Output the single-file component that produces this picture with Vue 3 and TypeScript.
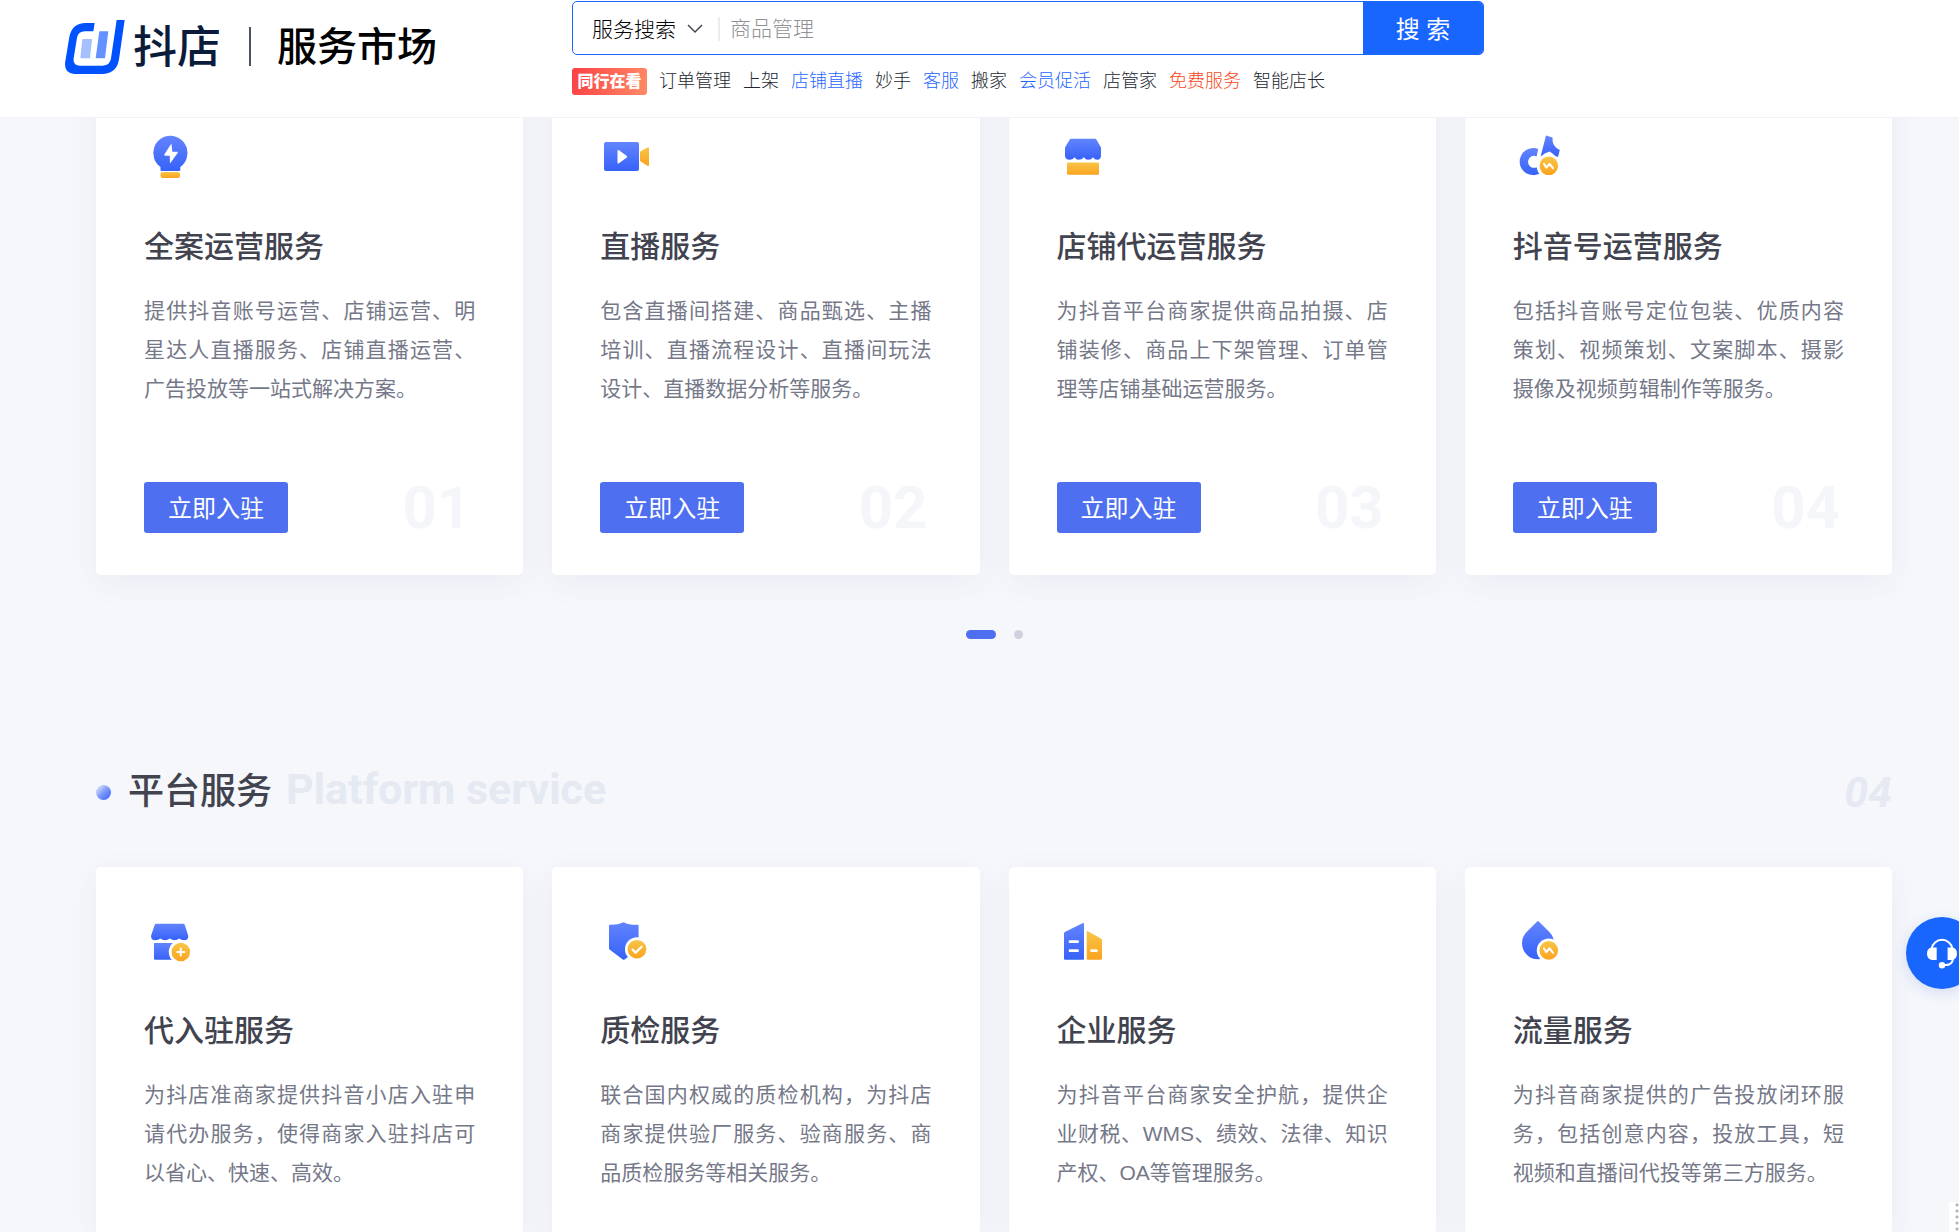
<script setup lang="ts">
import { ref } from 'vue'

type IconName = 'bulb' | 'video' | 'shop' | 'note' | 'shopPlus' | 'shield' | 'building' | 'drop'

interface Service {
  icon: IconName
  title: string
  text: string
}

interface HotWord {
  label: string
  tone?: 'blue' | 'red'
}

const keyword = ref('')
const scope = ref('service')

const hotWords: HotWord[] = [
  { label: '订单管理' },
  { label: '上架' },
  { label: '店铺直播', tone: 'blue' },
  { label: '妙手' },
  { label: '客服', tone: 'blue' },
  { label: '搬家' },
  { label: '会员促活', tone: 'blue' },
  { label: '店管家' },
  { label: '免费服务', tone: 'red' },
  { label: '智能店长' },
]

const operation: Service[] = [
  { icon: 'bulb', title: '全案运营服务', text: '提供抖音账号运营、店铺运营、明星达人直播服务、店铺直播运营、广告投放等一站式解决方案。' },
  { icon: 'video', title: '直播服务', text: '包含直播间搭建、商品甄选、主播培训、直播流程设计、直播间玩法设计、直播数据分析等服务。' },
  { icon: 'shop', title: '店铺代运营服务', text: '为抖音平台商家提供商品拍摄、店铺装修、商品上下架管理、订单管理等店铺基础运营服务。' },
  { icon: 'note', title: '抖音号运营服务', text: '包括抖音账号定位包装、优质内容策划、视频策划、文案脚本、摄影摄像及视频剪辑制作等服务。' },
]

const platform: Service[] = [
  { icon: 'shopPlus', title: '代入驻服务', text: '为抖店准商家提供抖音小店入驻申请代办服务，使得商家入驻抖店可以省心、快速、高效。' },
  { icon: 'shield', title: '质检服务', text: '联合国内权威的质检机构，为抖店商家提供验厂服务、验商服务、商品质检服务等相关服务。' },
  { icon: 'building', title: '企业服务', text: '为抖音平台商家安全护航，提供企业财税、WMS、绩效、法律、知识产权、OA等管理服务。' },
  { icon: 'drop', title: '流量服务', text: '为抖音商家提供的广告投放闭环服务，包括创意内容，投放工具，短视频和直播间代投等第三方服务。' },
]

const groups = [
  { key: 'operation', items: operation },
  { key: 'platform', items: platform },
]
</script>

<template>
  <div class="page">
    <svg class="defs" width="0" height="0" aria-hidden="true">
      <defs>
        <linearGradient id="blue" x1="0" y1="0" x2="0" y2="1">
          <stop offset="0" stop-color="#6284ff" />
          <stop offset="1" stop-color="#3762f8" />
        </linearGradient>
        <linearGradient id="gold" x1="0" y1="0" x2="0" y2="1">
          <stop offset="0" stop-color="#f8c548" />
          <stop offset="1" stop-color="#fba31f" />
        </linearGradient>
      </defs>
    </svg>

    <header class="header">
      <div class="brand">
        <svg class="logo" viewBox="75 57 180 162" aria-hidden="true">
          <path fill="#0052ff" d="M254 57L237 175Q230 219 186 219H102Q70 217 76 180L88 108Q96 66 137 66H164L160 91H135Q115 91 111 110L101 172Q98 194 120 194H188Q210 194 213 172L230 57Z" />
          <path fill="#a6c0ff" d="M127 114H156L150 172H121Z" />
          <path fill="#6391ff" d="M178 91H205L195 172H167Z" />
        </svg>
        <span class="brand-name">抖店</span>
        <span class="brand-line"></span>
        <span class="brand-sub">服务市场</span>
      </div>
      <div class="search-area">
        <form class="search" @submit.prevent>
          <div class="scope">
            <select v-model="scope" aria-label="搜索范围">
              <option value="service">服务搜索</option>
            </select>
            <svg class="chevron" viewBox="0 0 16 10" aria-hidden="true">
              <path d="M1 1L8 8L15 1" fill="none" stroke="#444950" stroke-width="1.5" />
            </svg>
          </div>
          <input v-model="keyword" type="text" placeholder="商品管理" aria-label="搜索关键词" />
          <button type="submit">搜 索</button>
        </form>
        <nav class="hot">
          <strong class="badge">同行在看</strong>
          <a v-for="word in hotWords" :key="word.label" href="#" :class="word.tone">{{ word.label }}</a>
        </nav>
      </div>
    </header>

    <main class="content">
      <template v-for="group in groups" :key="group.key">
        <div v-if="group.key === 'platform'" class="section-head">
          <span class="bullet"></span>
          <h2>平台服务</h2>
          <span class="section-en">Platform service</span>
          <span class="section-no">04</span>
        </div>

        <div class="cards">
          <article v-for="(item, index) in group.items" :key="item.title" class="card">
            <svg class="icon" viewBox="0 0 52 52" aria-hidden="true">
              <template v-if="item.icon === 'bulb'">
                <path fill="url(#blue)" d="M26.5 3.8A17.2 17.2 0 0 1 36.3 35V38Q36.3 39 35.3 39H17.5Q16.5 39 16.5 38V35A17.2 17.2 0 0 1 26.5 3.8Z" />
                <rect x="16.5" y="40" width="19.6" height="6" rx="2.5" fill="url(#gold)" />
                <path fill="#fff" d="M27.4 11.5L20.3 22.6Q20 23.6 21 23.7H25.7L26 31.5L33.8 20.8Q34 19.8 33.2 19.8H28.3Z" />
              </template>
              <template v-else-if="item.icon === 'video'">
                <rect x="4" y="10" width="35" height="29" rx="2" fill="url(#blue)" />
                <path fill="#fff" d="M17.5 19Q17.6 17.6 19 18.3L26.8 24Q27.4 24.8 26.8 25.4L19 31.2Q17.6 31.9 17.5 30.5Z" />
                <path fill="url(#gold)" d="M40 20.2Q40 19.7 40.6 19.3L47.5 15.4Q49 14.8 49 16.2V33Q49 34.5 47.5 33.8L40.6 29.5Q40 29.2 40 28.6Z" />
              </template>
              <template v-else-if="item.icon === 'shop'">
                <path fill="url(#blue)" d="M14.2 6.7H38Q39 6.7 39.5 7.7L44 15.5V24Q43.6 27.7 40.3 27.7Q37.5 27.7 36.1 25.2Q34.5 27.7 31 27.7Q28.5 27.7 26.9 25.2Q25 27.7 21.5 27.7Q19 27.7 17.7 25.2Q15.5 27.7 12.5 27.7Q8.4 27.7 8 24V15.5L12.6 7.7Q13.2 6.7 14.2 6.7Z" />
                <rect x="10" y="30.4" width="32" height="12.4" rx="1" fill="url(#gold)" />
              </template>
              <template v-else-if="item.icon === 'note'">
                <path fill="url(#blue)" d="M25.2 17.1A13.5 13.5 0 1 0 26.2 41.7Q24.2 39 23.6 35.3A6 6 0 1 1 23.6 24.4Z" />
                <path fill="url(#blue)" d="M33 3.6L39.5 5.5Q38.8 14.5 46.8 18L45 25Q41.6 24 39.5 21.5L36.7 19.5Q32 20.4 27.6 24.4Z" />
                <circle cx="35.8" cy="33.8" r="9.3" fill="url(#gold)" />
                <path d="M31 31.8L33.3 35.6L36.6 31.8L40 36.2" fill="none" stroke="#fff" stroke-width="2" stroke-linecap="round" stroke-linejoin="round" />
              </template>
              <template v-else-if="item.icon === 'shopPlus'">
                <path fill="url(#blue)" d="M12.5 7.7H39Q40.4 7.7 40.8 9L44.3 20Q44.3 24.2 40.2 24.2Q37 24.2 35.2 22.4Q33.2 24.2 30.5 24.2Q28 24.2 25.8 22.4Q23.6 24.2 21 24.2Q18.4 24.2 16.4 22.4Q14.4 24.2 11.3 24.2Q7 24.2 7 20L10.6 9Q11 7.7 12.5 7.7Z" />
                <path fill="url(#blue)" d="M10 27H41V43.7H11.5Q10 43.7 10 42.2Z" />
                <circle cx="36.8" cy="36" r="12" fill="#fff" />
                <circle cx="36.8" cy="36" r="9.3" fill="url(#gold)" />
                <path d="M36.8 32.4V39.6M33.2 36H40.4" stroke="#fff" stroke-width="2" stroke-linecap="round" />
              </template>
              <template v-else-if="item.icon === 'shield'">
                <path fill="url(#blue)" d="M23.7 6.2Q29 9 37.6 8.8Q38.6 8.8 38.6 9.8V32Q38.6 33 37.8 33.6L24.6 43.4Q23.7 44 22.8 43.4L9.8 33.8Q9 33.2 9 32.2V9.8Q9 8.8 10 8.8Q18 9 23.7 6.2Z" />
                <circle cx="37" cy="33.2" r="12" fill="#fff" />
                <circle cx="37" cy="33.2" r="9.3" fill="url(#gold)" />
                <path d="M32.6 33.6L35.6 36.6L41.6 30.8" fill="none" stroke="#fff" stroke-width="2.2" stroke-linecap="round" stroke-linejoin="round" />
              </template>
              <template v-else-if="item.icon === 'building'">
                <path fill="url(#blue)" d="M7 17.5Q7 16.5 7.8 16L25.5 7.2Q27 6.6 27 8V42.7Q27 43.7 26 43.7H8Q7 43.7 7 42.7Z" />
                <path fill="url(#gold)" d="M29.7 16Q29.8 14.6 31 15.3L44.2 22.7Q45 23.3 45 24.3V42.7Q45 43.7 44 43.7H30.7Q29.7 43.7 29.7 42.7Z" />
                <path d="M13 25.7H20.6M13 34.7H20.6M34.6 34.7H39.4" stroke="#fff" stroke-width="2.8" stroke-linecap="round" />
              </template>
              <template v-else>
                <path fill="url(#blue)" d="M24.2 5.5Q25 4.6 25.8 5.5L36.6 16.2A16 16 0 1 1 13.4 16.2Z" />
                <circle cx="35.8" cy="34.4" r="12" fill="#fff" />
                <circle cx="35.8" cy="34.4" r="9.3" fill="url(#gold)" />
                <path d="M31 32.4L33.3 36.2L36.6 32.4L40 36.8" fill="none" stroke="#fff" stroke-width="2" stroke-linecap="round" stroke-linejoin="round" />
              </template>
            </svg>
            <h3>{{ item.title }}</h3>
            <p>{{ item.text }}</p>
            <div v-if="group.key === 'operation'" class="card-foot">
              <button type="button">立即入驻</button>
              <span class="card-no">0{{ index + 1 }}</span>
            </div>
          </article>
        </div>

        <div v-if="group.key === 'operation'" class="dots">
          <button type="button" class="dot active" aria-label="第1页"></button>
          <button type="button" class="dot" aria-label="第2页"></button>
        </div>
      </template>
    </main>

    <button type="button" class="support" aria-label="在线客服">
      <svg viewBox="0 0 30 31" aria-hidden="true">
        <path d="M4.5 11A10.6 10.6 0 0 1 25.5 11M26 21Q25 27 19 27H15" fill="none" stroke="#fff" stroke-width="2" />
        <path fill="#fff" d="M9.7 9.5V22H5Q0 21 0 15.8Q0 10 5 9.5ZM20.6 9.5V22H25Q30 21 30 15.8Q30 10 25 9.5Z" />
        <circle cx="15" cy="27.2" r="3.2" fill="#fff" />
      </svg>
    </button>
    <div class="grip"></div>
  </div>
</template>

<style>
body {
  margin: 0;
}
</style>

<style scoped>
.page {
  height: 100vh;
  overflow-x: hidden;
  overflow-y: auto;
  scrollbar-width: none;
  background: #f5f7fb;
  font-family: "Liberation Sans", "Noto Sans CJK SC", sans-serif;
  color: #41434f;
}

.page * {
  box-sizing: border-box;
}

.defs {
  position: absolute;
}

button,
input,
select {
  margin: 0;
  border: 0;
  padding: 0;
  font-family: inherit;
}

button {
  cursor: pointer;
}

/* Header */
.header {
  position: sticky;
  top: 0;
  z-index: 2;
  display: flex;
  height: 118px;
  padding-left: 65px;
  background: #fff;
  border-bottom: 1px solid #f1f2f5;
}

.brand {
  display: flex;
  align-items: center;
  flex: 0 0 507px;
  height: 93px;
  line-height: 60px;
}

.logo {
  width: 60px;
  height: 54px;
}

.brand-name {
  margin-left: 8px;
  padding-top: 2px;
  font-size: 44px;
  font-weight: 500;
  color: #0b1b3a;
}

.brand-line {
  width: 2px;
  height: 39px;
  margin: 0 26px 0 28px;
  background: #4a5266;
}

.brand-sub {
  font-size: 40px;
  font-weight: 500;
  color: #000;
}

.search-area {
  flex: 0 1 912px;
  padding-top: 1px;
}

.search {
  display: flex;
  height: 54px;
  border: 1px solid #1966ff;
  border-radius: 5px;
  overflow: hidden;
}

.scope {
  display: flex;
  align-items: center;
  flex: none;
  position: relative;
  margin: 15px 0 13px;
  padding-left: 19px;
  border-right: 2px solid #ececee;
}

.scope select {
  width: 126px;
  height: 32px;
  appearance: none;
  background: transparent;
  font-size: 21px;
  font-weight: 300;
  color: #000;
}

.chevron {
  position: absolute;
  right: 15px;
  width: 16px;
  height: 10px;
  pointer-events: none;
}

.search input {
  flex: 1;
  min-width: 0;
  padding: 2px 10px 0;
  font-size: 21px;
  font-weight: 300;
  outline: none;
}

.search input::placeholder {
  color: #8f9196;
  opacity: 1;
}

.search button {
  flex: 0 0 120px;
  padding-bottom: 2px;
  background: #1966ff;
  color: #fff;
  font-size: 24px;
}

.hot {
  display: flex;
  align-items: center;
  gap: 12px;
  margin-top: 12px;
  font-size: 18px;
  font-weight: 300;
  line-height: 27px;
  white-space: nowrap;
}

.hot a {
  padding-top: 1px;
  color: #23272f;
  text-decoration: none;
}

.hot a.blue {
  color: #1f66ff;
}

.hot a.red {
  color: #f9481a;
}

.badge {
  width: 75px;
  border-radius: 3px;
  background: linear-gradient(100deg, #fb4144, #ff8a66);
  color: #fff;
  font-size: 16px;
  font-weight: 900;
  text-align: center;
}

/* Service cards */
.content {
  margin-top: -35px;
  padding: 0 67px 64px 96px;
}

.cards {
  display: grid;
  grid-template-columns: repeat(4, 1fr);
  gap: 29px;
}

.card {
  padding: 49px 48px 42px;
  border-radius: 5px;
  background: #fff;
  box-shadow: 0 8px 32px rgba(60, 70, 130, 0.06);
}

.icon {
  display: block;
  width: 52px;
  height: 52px;
}

h3 {
  margin: 43px 0 24px;
  font-size: 30px;
  font-weight: 500;
  line-height: 40px;
}

.card p {
  margin: 0;
  font-size: 21px;
  line-height: 39px;
  color: #757888;
  text-align: justify;
}

.card-foot {
  display: flex;
  align-items: center;
  justify-content: space-between;
  height: 51px;
  margin-top: 74px;
}

.card-foot button {
  width: 144px;
  height: 51px;
  padding-bottom: 2px;
  border-radius: 3px;
  background: #4d6ff0;
  color: #fff;
  font-size: 24px;
}

.card-no {
  padding-right: 4px;
  font-family: Roboto, sans-serif;
  font-size: 60px;
  font-weight: 700;
  line-height: 51px;
  color: #f5f6fa;
}

.dots {
  display: flex;
  justify-content: center;
  gap: 18px;
  margin-top: 55px;
}

.dot {
  width: 9px;
  height: 9px;
  border-radius: 5px;
  background: #cfd1de;
}

.dot.active {
  width: 30px;
  background: #4d6ff0;
}

/* Section heading */
.section-head {
  display: flex;
  align-items: center;
  height: 56px;
  margin: 125px 0 47px;
}

.bullet {
  width: 15px;
  height: 15px;
  border-radius: 50%;
  background: linear-gradient(135deg, #e9edfb 5%, #7c98fb 50%, #426bfa 90%);
}

h2 {
  margin: 0 14px 0 17px;
  font-size: 36px;
  font-weight: 500;
  line-height: 56px;
}

.section-en,
.section-no {
  font-family: Roboto, sans-serif;
  font-size: 43px;
  font-weight: 700;
  line-height: 56px;
  color: #e4e9f2;
}

.section-en {
  padding-bottom: 6px;
}

.section-no {
  margin-left: auto;
  font-style: italic;
}

/* Floating items */
.support {
  position: fixed;
  right: -19px;
  top: 917px;
  z-index: 3;
  display: flex;
  align-items: center;
  justify-content: center;
  width: 72px;
  height: 72px;
  border-radius: 50%;
  background: #1966ff;
  box-shadow: 0 4px 14px rgba(40, 90, 200, 0.16);
}

.support svg {
  width: 30px;
  height: 31px;
}

.grip {
  position: fixed;
  right: 0;
  bottom: 0;
  z-index: 3;
  width: 10px;
  height: 30px;
  background: radial-gradient(circle at 8px 3px, #b5b5b5 1px, #fff 2px) 0 0 / 10px 6px;
}
</style>
